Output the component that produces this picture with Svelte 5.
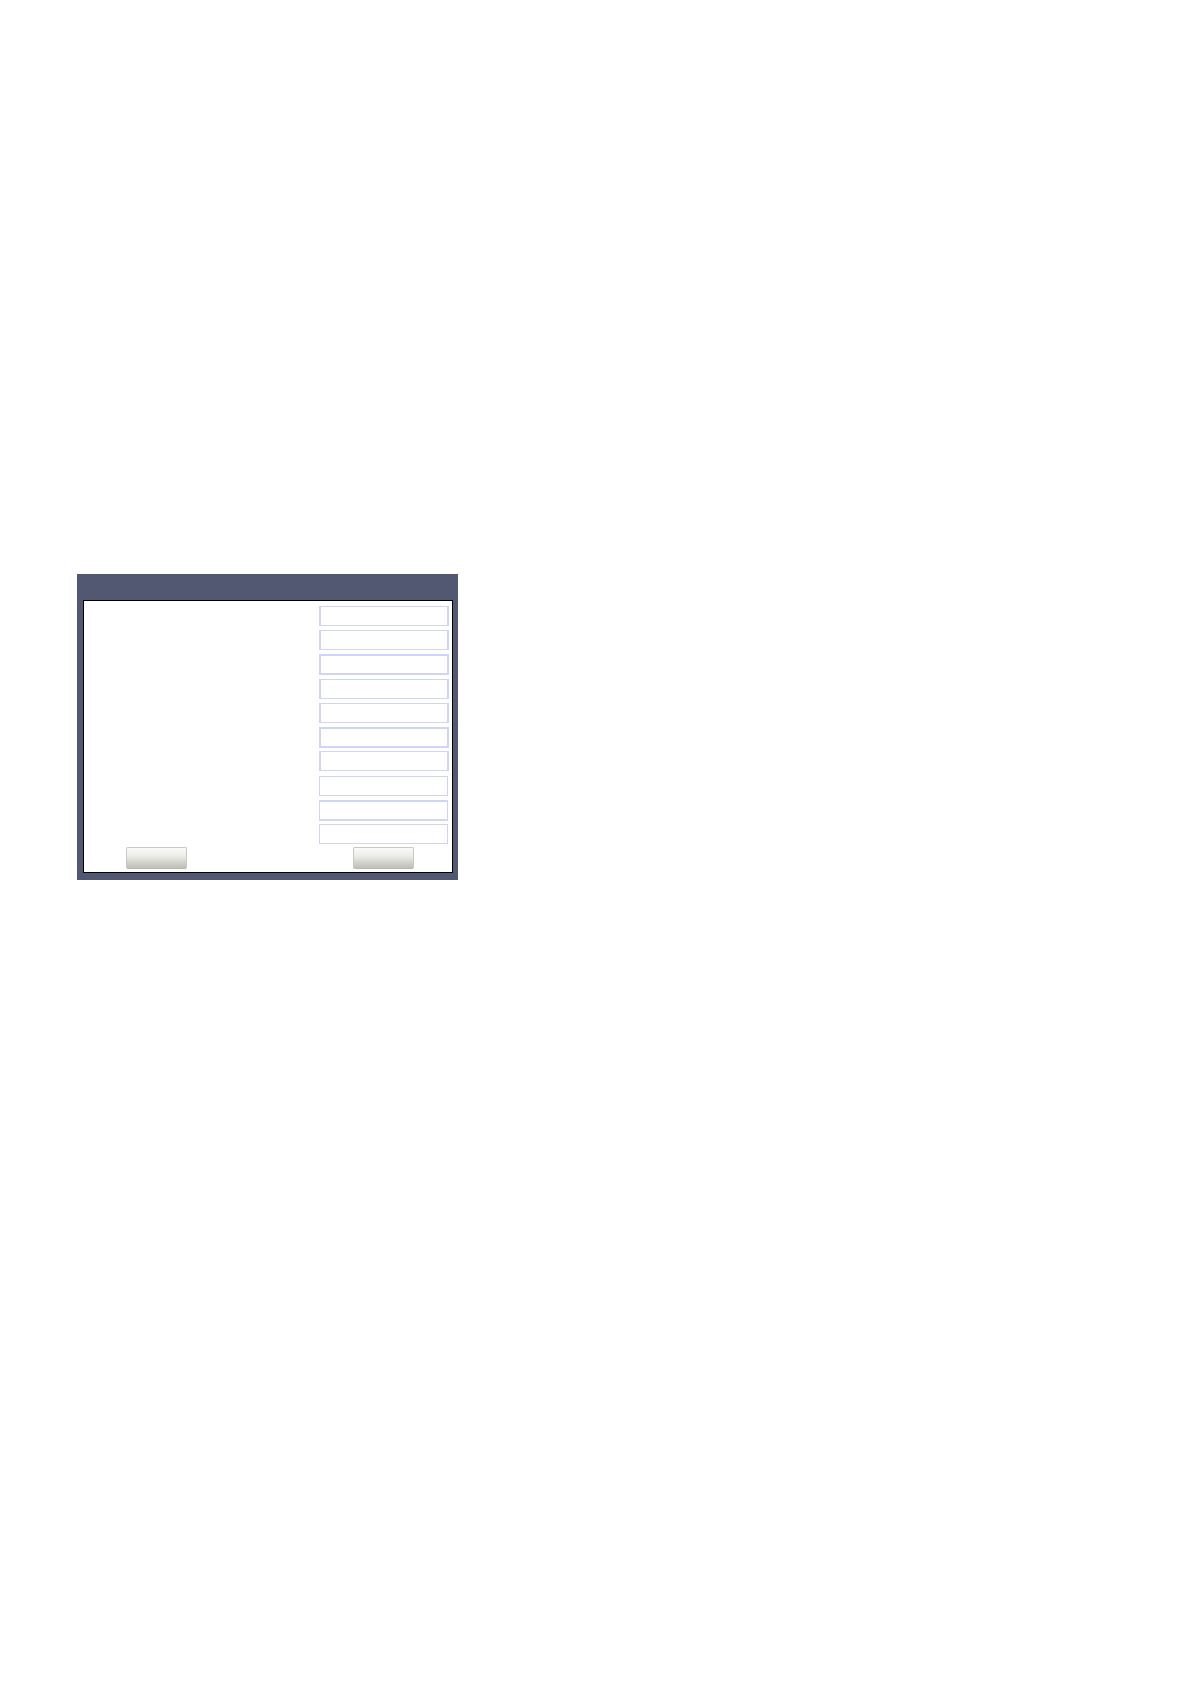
<script lang="ts">
  type Field = { id: number; value: string; edge: string; narrow?: boolean };

  let fields: Field[] = $state([
    { id: 1, value: "", edge: "thin" },
    { id: 2, value: "", edge: "thin" },
    { id: 3, value: "", edge: "thick" },
    { id: 4, value: "", edge: "thin" },
    { id: 5, value: "", edge: "thin" },
    { id: 6, value: "", edge: "thick" },
    { id: 7, value: "", edge: "thin" },
    { id: 8, value: "", edge: "thin", narrow: true },
    { id: 9, value: "", edge: "thick", narrow: true },
    { id: 10, value: "", edge: "thin", narrow: true },
  ]);
</script>

<main class="page">
  <form class="window" onsubmit={(e) => e.preventDefault()}>
    <div class="panel">
      <div class="fields">
        {#each fields as field (field.id)}
          <input
            class="field {field.edge}"
            class:narrow={field.narrow}
            type="text"
            aria-label="Field {field.id}"
            bind:value={field.value}
          />
        {/each}
      </div>
      <div class="actions">
        <button type="button" aria-label="Cancel"></button>
        <button type="submit" aria-label="OK"></button>
      </div>
    </div>
  </form>
</main>

<style>
  :global(body) {
    margin: 0;
    background: #fff;
  }

  .page {
    padding: 574px 24px 24px 77px;
    font-family: "Liberation Sans", Arial, sans-serif;
    font-size: 12px;
  }

  .window {
    box-sizing: border-box;
    width: 100%;
    max-width: 381px;
    padding: 26px 5px 7px 6px;
    background: #535872;
  }

  .panel {
    border: 1px solid #000;
    background: #fff;
  }

  .fields {
    display: grid;
    grid-template-columns: 130px;
    grid-template-rows: repeat(10, 20px);
    justify-content: end;
    align-content: space-between;
    height: 238px;
    padding: 5px 3px 3px;
  }

  .field {
    box-sizing: border-box;
    width: 100%;
    height: 20px;
    margin: 0;
    padding: 0 4px;
    border: solid #d2d5ee;
    border-width: 1px 2px;
    border-radius: 0;
    background: #fff;
    font: inherit;
  }

  .thick {
    height: 21px;
    border-width: 2px;
    border-top-color: #cdd6f8;
    border-bottom-color: #cdd6f8;
  }

  .narrow {
    width: 129px;
    border-left-width: 1px;
    border-right-width: 1px;
  }

  .actions {
    display: flex;
    justify-content: space-between;
    padding: 0 38px 3px 42px;
  }

  button {
    width: 61px;
    height: 22px;
    padding: 0;
    border: 1px solid #c9c9c4;
    border-bottom-color: #b8b9b1;
    border-radius: 2px;
    background: linear-gradient(#fafaf9, #ecece9 40%, #dcddd6 60%, #bdbeb5);
    font: inherit;
  }
</style>
